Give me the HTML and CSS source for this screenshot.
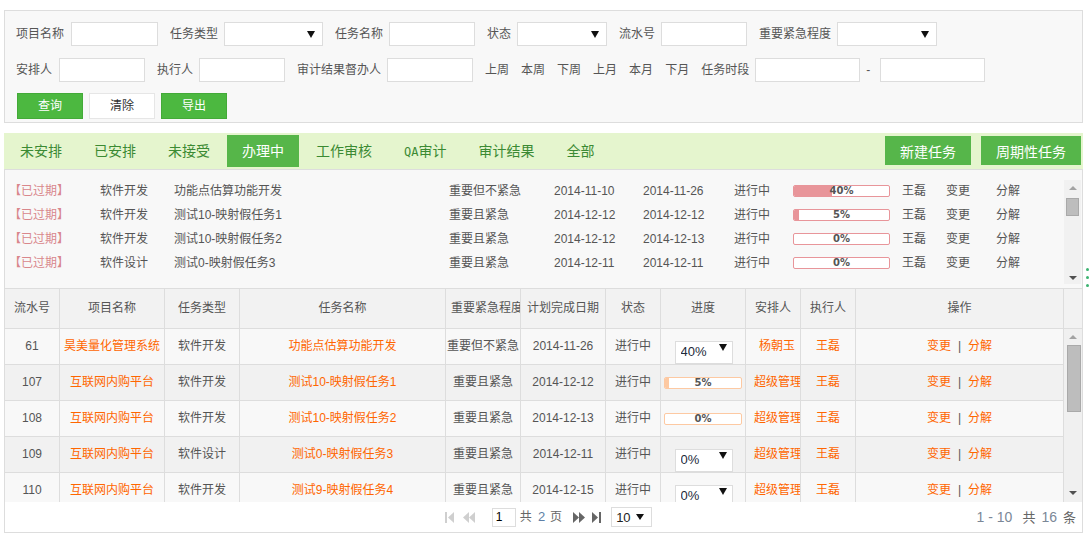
FILE: index.html
```html
<!DOCTYPE html>
<html lang="zh-CN">
<head>
<meta charset="utf-8">
<title>任务管理</title>
<link rel="stylesheet" href="styles.css">
</head>
<body>
<div class="page">
  <form class="filter">
    <div class="frow">
      <label class="lbl">项目名称</label><input class="in w87" type="text">
      <label class="lbl">任务类型</label><span class="sel w99"><select><option></option></select></span>
      <label class="lbl">任务名称</label><input class="in w86" type="text">
      <label class="lbl">状态</label><span class="sel w90"><select><option></option></select></span>
      <label class="lbl">流水号</label><input class="in w86" type="text">
      <label class="lbl">重要紧急程度</label><span class="sel w100"><select><option></option></select></span>
    </div>
    <div class="frow frow2">
      <label class="lbl">安排人</label><input class="in w86 ml1" type="text">
      <label class="lbl">执行人</label><input class="in w86" type="text">
      <label class="lbl">审计结果督办人</label><input class="in w86" type="text">
      <a class="quick">上周</a><a class="quick">本周</a><a class="quick">下周</a><a class="quick">上月</a><a class="quick">本月</a><a class="quick">下月</a>
      <label class="lbl">任务时段</label><input class="in w105 nomr" type="text"><span class="dash">-</span><input class="in w105" type="text">
    </div>
    <div class="brow">
      <button type="button" class="btn btn-green">查询</button>
      <button type="button" class="btn btn-white">清除</button>
      <button type="button" class="btn btn-green">导出</button>
    </div>
  </form>

  <div class="tabbar">
    <ul class="tabs">
      <li>未安排</li>
      <li>已安排</li>
      <li>未接受</li>
      <li class="active">办理中</li>
      <li>工作审核</li>
      <li><span class="qa">QA</span>审计</li>
      <li>审计结果</li>
      <li>全部</li>
    </ul>
    <div class="tab-actions">
      <button type="button" class="act">新建任务</button>
      <button type="button" class="act">周期性任务</button>
    </div>
  </div>

  <div class="board">
    <div class="overdue">
      <div class="od-list">
        <div class="od-row">
          <span class="tag">【已过期】</span><span>软件开发</span><span>功能点估算功能开发</span><span>重要但不紧急</span>
          <span class="mono">2014-11-10</span><span class="mono">2014-11-26</span><span>进行中</span>
          <span class="bar pink"><span class="fill" style="width:40%"></span><span class="pct">40%</span></span>
          <span>王磊</span><span>变更</span><span>分解</span>
        </div>
        <div class="od-row">
          <span class="tag">【已过期】</span><span>软件开发</span><span>测试10-映射假任务1</span><span>重要且紧急</span>
          <span class="mono">2014-12-12</span><span class="mono">2014-12-12</span><span>进行中</span>
          <span class="bar pink"><span class="fill" style="width:5%"></span><span class="pct">5%</span></span>
          <span>王磊</span><span>变更</span><span>分解</span>
        </div>
        <div class="od-row">
          <span class="tag">【已过期】</span><span>软件开发</span><span>测试10-映射假任务2</span><span>重要且紧急</span>
          <span class="mono">2014-12-12</span><span class="mono">2014-12-13</span><span>进行中</span>
          <span class="bar pink"><span class="fill" style="width:0%"></span><span class="pct">0%</span></span>
          <span>王磊</span><span>变更</span><span>分解</span>
        </div>
        <div class="od-row">
          <span class="tag">【已过期】</span><span>软件设计</span><span>测试0-映射假任务3</span><span>重要且紧急</span>
          <span class="mono">2014-12-11</span><span class="mono">2014-12-11</span><span>进行中</span>
          <span class="bar pink"><span class="fill" style="width:0%"></span><span class="pct">0%</span></span>
          <span>王磊</span><span>变更</span><span>分解</span>
        </div>
      </div>
      <div class="vscroll vs-small">
        <span class="arr-up"></span><span class="thumb"></span><span class="spacer"></span><span class="arr-down"></span>
      </div>
    </div>

    <div class="grid-head">
      <div class="hc">流水号</div>
      <div class="hc">项目名称</div>
      <div class="hc">任务类型</div>
      <div class="hc">任务名称</div>
      <div class="hc hc-clip">重要紧急程度</div>
      <div class="hc">计划完成日期</div>
      <div class="hc">状态</div>
      <div class="hc">进度</div>
      <div class="hc">安排人</div>
      <div class="hc">执行人</div>
      <div class="hc">操作</div>
      <div class="hc last"></div>
    </div>

    <div class="grid-body">
      <div class="rows">
        <div class="row odd">
          <div class="c num">61</div><div class="c link">昊美量化管理系统</div><div class="c">软件开发</div><div class="c link">功能点估算功能开发</div><div class="c">重要但不紧急</div><div class="c num">2014-11-26</div><div class="c">进行中</div>
          <div class="c fx"><span class="sel sm"><select><option>40%</option></select></span></div>
          <div class="c link who">杨朝玉</div><div class="c link">王磊</div>
          <div class="c ops"><a>变更</a><span class="sep">|</span><a>分解</a></div>
        </div>
        <div class="row even">
          <div class="c num">107</div><div class="c link">互联网内购平台</div><div class="c">软件开发</div><div class="c link">测试10-映射假任务1</div><div class="c">重要且紧急</div><div class="c num">2014-12-12</div><div class="c">进行中</div>
          <div class="c fx"><span class="bar orange"><span class="fill" style="width:5%"></span><span class="pct">5%</span></span></div>
          <div class="c link who">超级管理员</div><div class="c link">王磊</div>
          <div class="c ops"><a>变更</a><span class="sep">|</span><a>分解</a></div>
        </div>
        <div class="row odd">
          <div class="c num">108</div><div class="c link">互联网内购平台</div><div class="c">软件开发</div><div class="c link">测试10-映射假任务2</div><div class="c">重要且紧急</div><div class="c num">2014-12-13</div><div class="c">进行中</div>
          <div class="c fx"><span class="bar orange"><span class="fill" style="width:0%"></span><span class="pct">0%</span></span></div>
          <div class="c link who">超级管理员</div><div class="c link">王磊</div>
          <div class="c ops"><a>变更</a><span class="sep">|</span><a>分解</a></div>
        </div>
        <div class="row even">
          <div class="c num">109</div><div class="c link">互联网内购平台</div><div class="c">软件设计</div><div class="c link">测试0-映射假任务3</div><div class="c">重要且紧急</div><div class="c num">2014-12-11</div><div class="c">进行中</div>
          <div class="c fx"><span class="sel sm"><select><option>0%</option></select></span></div>
          <div class="c link who">超级管理员</div><div class="c link">王磊</div>
          <div class="c ops"><a>变更</a><span class="sep">|</span><a>分解</a></div>
        </div>
        <div class="row odd">
          <div class="c num">110</div><div class="c link">互联网内购平台</div><div class="c">软件开发</div><div class="c link">测试9-映射假任务4</div><div class="c">重要且紧急</div><div class="c num">2014-12-15</div><div class="c">进行中</div>
          <div class="c fx"><span class="sel sm"><select><option>0%</option></select></span></div>
          <div class="c link who">超级管理员</div><div class="c link">王磊</div>
          <div class="c ops"><a>变更</a><span class="sep">|</span><a>分解</a></div>
        </div>
      </div>
      <div class="vscroll vs-big">
        <span class="arr-up"></span><span class="thumb"></span><span class="spacer"></span><span class="arr-down"></span>
      </div>
    </div>

    <div class="pager">
      <div></div>
      <div class="nav">
        <svg class="ico first" width="9" height="11" viewBox="0 0 9 11"><rect x="0" y="0" width="2" height="11"/><polygon points="9,0 3,5.5 9,11"/></svg>
        <svg class="ico prev" width="12" height="11" viewBox="0 0 12 11"><polygon points="6,0 0,5.5 6,11"/><polygon points="12,0 6,5.5 12,11"/></svg>
        <input class="page-in" type="text" value="1">
        <span class="pg-txt">共</span><span class="pg-num">2</span><span class="pg-txt pg-end">页</span>
        <svg class="ico next" width="12" height="11" viewBox="0 0 12 11"><polygon points="0,0 6,5.5 0,11"/><polygon points="6,0 12,5.5 6,11"/></svg>
        <svg class="ico last" width="9" height="11" viewBox="0 0 9 11"><polygon points="0,0 6,5.5 0,11"/><rect x="7" y="0" width="2" height="11"/></svg>
        <span class="sel pg-size"><select><option>10</option></select></span>
      </div>
      <div class="info"><span class="n">1 - 10</span><span class="t">共</span><span class="n">16</span><span class="t t-end">条</span></div>
    </div>
  </div>

  <div class="handle"><i></i><i></i><i></i></div>
</div>
</body>
</html>
```

FILE: styles.css
```css
* { box-sizing: border-box; }

body {
  margin: 0;
  background: #fff;
  color: #555;
  font: 12px/1.2 "Liberation Sans", "Noto Sans CJK SC", sans-serif;
}

.page {
  position: relative;
  width: 1079px;
  margin-left: 4px;
  padding-top: 10px;
}

/* ---------- filter panel ---------- */
.filter {
  margin: 0;
  background: #f8f8f8;
  border: 1px solid #ddd;
  padding: 11px 11px 3px;
}

.frow {
  display: flex;
  align-items: center;
  height: 24px;
  margin-bottom: 12px;
}
.frow2 { margin-bottom: 11px; }

.lbl { margin-right: 6px; color: #555; white-space: nowrap; }

.in {
  height: 24px;
  border: 1px solid #ddd;
  background: #fff;
  margin: 0 12px 0 0;
  padding: 0 4px;
  font: inherit;
  outline: none;
}
.w86 { width: 86px; }
.w87 { width: 87px; margin-left: 1px; }
.w90 { width: 90px; }
.w99 { width: 99px; }
.w100 { width: 100px; }
.w105 { width: 105px; }
.ml1 { margin-left: 1px; }
.nomr { margin-right: 0; }

.quick { margin-right: 12px; color: #555; }
.dash { margin: 0 10px 0 6px; }

.sel {
  position: relative;
  display: inline-block;
  height: 24px;
  margin-right: 12px;
}
.sel select {
  appearance: none;
  -webkit-appearance: none;
  width: 100%;
  height: 100%;
  border: 1px solid #ddd;
  border-radius: 0;
  background: #fff;
  font: inherit;
  line-height: normal;
  color: #222;
  padding: 0 4px;
  outline: none;
}
.sel::after {
  content: "";
  position: absolute;
  right: 8px;
  top: 50%;
  margin-top: -3px;
  border-left: 4px solid transparent;
  border-right: 4px solid transparent;
  border-top: 7px solid #111;
  pointer-events: none;
}

.brow { display: flex; height: 26px; padding-left: 1px; }
.btn {
  width: 66px;
  height: 26px;
  margin-right: 6px;
  font: inherit;
  border: 1px solid #ddd;
  padding: 0;
  cursor: pointer;
}
.btn-green { background: #4cb840; border-color: #43aa38; color: #fff; }
.btn-white { background: #fff; border-color: #e6e6e6; color: #333; }

/* ---------- tabs ---------- */
.tabbar {
  margin-top: 10px;
  height: 36px;
  background: #e5f5ce;
  display: flex;
  justify-content: space-between;
  align-items: flex-start;
}
.tabs {
  display: flex;
  margin: 0;
  padding: 0 0 0 1px;
  list-style: none;
}
.tabs li {
  margin-top: 2px;
  margin-right: 2px;
  height: 32px;
  line-height: 32px;
  padding: 0 15px;
  font-size: 14px;
  color: #3b8a33;
  white-space: nowrap;
}
.tabs li.active { background: #56b649; color: #fff; }
.tabs .qa { font-family: "DejaVu Sans Mono", monospace; font-size: 12px; }

.tab-actions {
  display: flex;
  gap: 10px;
  padding: 3px 2px 0 0;
}
.act {
  height: 29px;
  padding: 0 15px;
  border: 0;
  background: #56b64a;
  color: #fff;
  font: 14px "Liberation Sans", "Noto Sans CJK SC", sans-serif;
}

/* ---------- board ---------- */
.board { border: 1px solid #ddd; }

.overdue {
  height: 118px;
  background: #f8f8f8;
  display: flex;
  padding: 10px 1px 4px 0;
}
.od-list { flex: 1; margin-top: -1px; overflow: hidden; }
.od-row {
  display: grid;
  grid-template-columns: 91px 74px 275px 105px 89px 91px 59px 109px 44px 50px 1fr;
  align-items: center;
  height: 24px;
  padding-left: 4px;
  white-space: nowrap;
}
.od-row .tag { color: #d9878c; }
.mono { font-family: "Liberation Sans", sans-serif; }

.bar {
  position: relative;
  display: block;
  height: 12px;
  border: 1px solid;
  border-radius: 2px;
  background: #fff;
  overflow: hidden;
}
.bar.pink { width: 97px; border-color: #e8959a; }
.bar.pink .fill { background: #e8959a; }
.bar.orange { width: 78px; border-color: #fdc9a2; }
.bar.orange .fill { background: #fdc9a2; }
.bar .fill { display: block; height: 100%; }
.bar .pct {
  position: absolute;
  left: 0; right: 0; top: 0;
  text-align: center;
  font: bold 10px/10px "DejaVu Sans", sans-serif;
  color: #555;
}

/* scrollbars */
.vscroll {
  display: flex;
  flex-direction: column;
  align-items: center;
  background: #f1f1f1;
}
.vscroll .arr-up {
  width: 0; height: 0;
  border-left: 4px solid transparent;
  border-right: 4px solid transparent;
  border-bottom: 4px solid #a3a3a3;
}
.vscroll .arr-down {
  width: 0; height: 0;
  border-left: 4px solid transparent;
  border-right: 4px solid transparent;
  border-top: 4px solid #505050;
}
.vscroll .thumb {
  background: #bdbdbd;
  border: 1px solid #a9a9a9;
}
.vscroll .spacer { flex: 1; }

.vs-small { width: 17px; padding: 6px 0 4px; }
.vs-small .thumb { width: 13px; height: 18px; margin-top: 8px; }
.vs-big { width: 18px; padding: 6px 0 7px; background: #f0f0f0; }
.vs-big .thumb { width: 14px; height: 67px; margin-top: 6px; margin-left: 1px; }

/* table */
.grid-head, .row {
  display: grid;
  grid-template-columns: 55px 105px 75px 206px 75px 85px 55px 85px 55px 55px 208px;
}
.grid-head {
  grid-template-columns: 55px 105px 75px 206px 75px 85px 55px 85px 55px 55px 208px 18px;
  height: 41px;
  border-top: 1px solid #ddd;
  border-bottom: 1px solid #ddd;
  background: #f2f2f2;
}
.hc {
  border-right: 1px solid #ddd;
  line-height: 39px;
  text-align: center;
  padding: 0 4px;
  white-space: nowrap;
  overflow: hidden;
  color: #555;
}
.hc.hc-clip { padding: 0 0 0 5px; }
.hc.last { border-right: 0; }

.grid-body { display: flex; height: 173px; }
.rows { flex: 1; overflow: hidden; }
.row { height: 36px; border-bottom: 1px solid #ddd; }
.row.odd { background: #f8f8f8; }
.row.even { background: #f1f1f1; }
.c {
  border-right: 1px solid #ddd;
  line-height: 35px;
  text-align: center;
  padding: 0 1px;
  white-space: nowrap;
  overflow: hidden;
  color: #555;
}
.c.link { color: #f60; }
.c.who { padding: 0 0 0 8px; }
.c.fx { display: flex; align-items: center; justify-content: center; padding: 0; }
.c.ops a { color: #f60; }
.c.ops .sep { margin: 0 7px; color: #555; }

.sel.sm { width: 58px; height: 23px; margin: 0 0 0 1px; }
.sel.sm select { font-size: 13px; color: #1d2a3a; padding: 0 5px 2px; }
.sel.sm::after { right: 6px; }

/* pager */
.pager {
  height: 30px;
  background: #fff;
  display: grid;
  grid-template-columns: 1fr auto 1fr;
  align-items: center;
}
.nav { display: flex; align-items: center; padding-left: 10px; }
.ico { display: block; }
.ico.first, .ico.prev { fill: #cfcfcf; }
.ico.next, .ico.last { fill: #666; }
.ico.first { margin-right: 9px; }
.ico.prev { margin-right: 17px; }
.ico.next { margin-right: 7px; }
.ico.last { margin-right: 10px; }
.page-in {
  width: 24px;
  height: 19px;
  border: 1px solid #ddd;
  padding: 0 3px;
  font: 12px "Liberation Sans", sans-serif;
  color: #000;
  margin-right: 4px;
}
.pg-txt { color: #666; }
.pg-num { color: #5e7fa6; font-size: 13px; margin: 0 5px 0 6px; }
.pg-end { margin-right: 11px; }
.sel.pg-size { width: 41px; height: 20px; margin: 0; }
.sel.pg-size select { font-size: 13px; color: #222; padding: 0 4px; }
.sel.pg-size::after { right: 8px; border-top-width: 6px; }

.info { justify-self: end; padding-right: 6px; white-space: nowrap; }
.info .n { color: #7b8797; font-size: 14px; }
.info .t { color: #666; font-size: 13px; margin: 0 6px 0 10px; }
.info .t-end { margin: 0 0 0 6px; }

/* splitter handle */
.handle {
  position: absolute;
  left: 1082px;
  top: 268px;
  display: flex;
  flex-direction: column;
  gap: 5px;
}
.handle i { display: block; width: 3px; height: 3px; border-radius: 50%; background: #3cb371; }
```
